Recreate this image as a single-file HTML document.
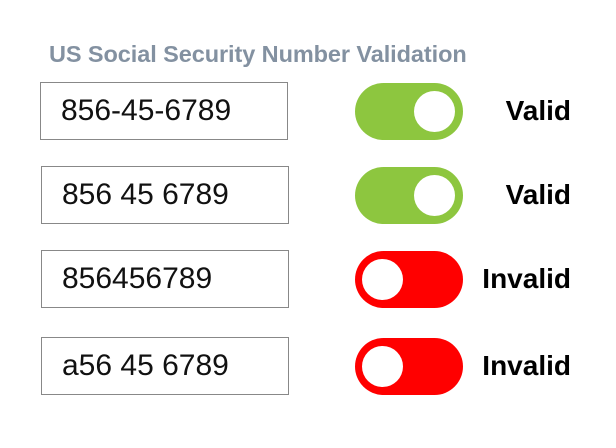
<!DOCTYPE html>
<html><head><style>
body{margin:0;width:616px;height:448px;background:#fff;font-family:"Liberation Sans",sans-serif;position:relative;overflow:hidden}
.t{position:absolute;left:49px;top:41px;font-size:23.5px;font-weight:bold;color:#8391a1;white-space:nowrap;letter-spacing:-0.08px}
.b{position:absolute;left:41px;width:248px;height:58px;border:1px solid #888;box-sizing:border-box;font-size:30px;line-height:56px;padding-left:20px;color:#111}
.s{position:absolute;left:355px;width:108px;height:57px;border-radius:29px}
.k{position:absolute;top:8px;width:41px;height:41px;border-radius:50%;background:#fff}
.g{background:#8dc63f}.g .k{left:59px}
.r{background:#ff0000}.r .k{left:7px}
.l{position:absolute;right:45px;font-size:28px;font-weight:bold;color:#000;line-height:57px}
</style></head><body>
<div class="t">US Social Security Number Validation</div>
<div class="b" style="top:82px;left:40px">856-45-6789</div>
<div class="s g" style="top:83px"><div class="k"></div></div>
<div class="l" style="top:82px">Valid</div>
<div class="b" style="top:166px">856 45 6789</div>
<div class="s g" style="top:167px"><div class="k"></div></div>
<div class="l" style="top:166px">Valid</div>
<div class="b" style="top:250px">856456789</div>
<div class="s r" style="top:251px"><div class="k"></div></div>
<div class="l" style="top:250px">Invalid</div>
<div class="b" style="top:337px">a56 45 6789</div>
<div class="s r" style="top:338px"><div class="k"></div></div>
<div class="l" style="top:337px">Invalid</div>
</body></html>
